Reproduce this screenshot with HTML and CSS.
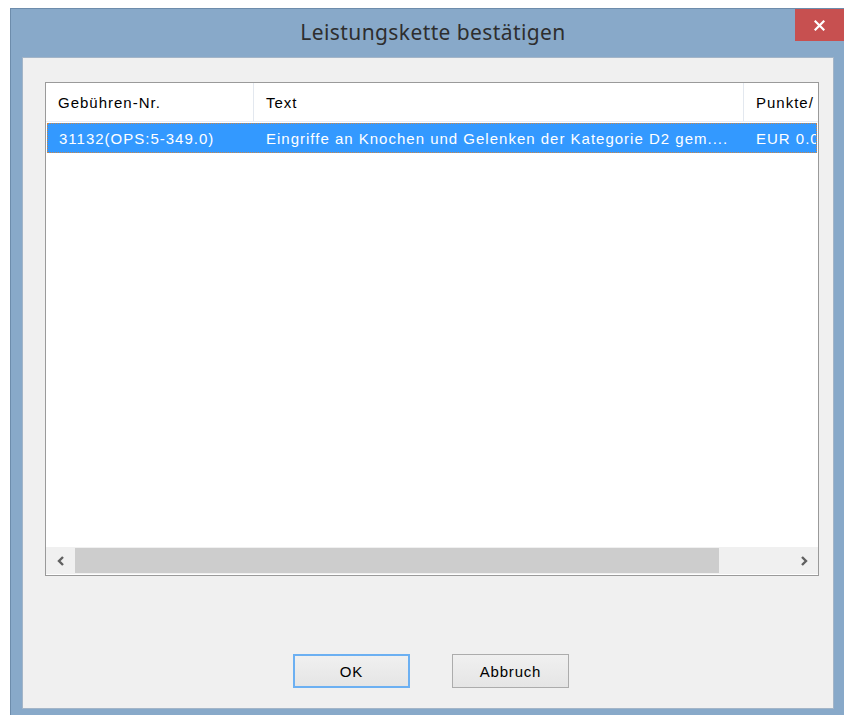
FILE: index.html
```html
<!DOCTYPE html>
<html lang="de">
<head>
<meta charset="utf-8">
<title>Leistungskette bestätigen</title>
<link rel="stylesheet" href="styles.css">
</head>
<body>
<div class="window">
  <div class="titlebar">
    <span class="title">Leistungskette bestätigen</span>
    <div class="close">
      <svg width="11" height="11" viewBox="0 0 11 11"><path d="M1.5 1.5 L9.5 9.5 M9.5 1.5 L1.5 9.5" stroke="#fff" stroke-width="2.2" stroke-linecap="square"/></svg>
    </div>
  </div>
  <div class="client">
    <div class="listview">
      <div class="header">
        <div class="col c1">Gebühren-Nr.</div>
        <div class="col c2">Text</div>
        <div class="col c3">Punkte/</div>
      </div>
      <div class="rows">
        <div class="row selected">
          <div class="cell c1">31132(OPS:5-349.0)</div>
          <div class="cell c2">Eingriffe an Knochen und Gelenken der Kategorie D2 gem....</div>
          <div class="cell c3">EUR 0.0</div>
        </div>
      </div>
      <div class="hscroll">
        <div class="arrow">
          <svg width="10" height="12" viewBox="0 0 10 12"><path d="M7 2 L3 6 L7 10" fill="none" stroke="#606060" stroke-width="2.4"/></svg>
        </div>
        <div class="track"><div class="thumb"></div></div>
        <div class="arrow">
          <svg width="10" height="12" viewBox="0 0 10 12"><path d="M3 2 L7 6 L3 10" fill="none" stroke="#606060" stroke-width="2.4"/></svg>
        </div>
      </div>
    </div>
    <div class="buttons">
      <button class="btn default">OK</button>
      <button class="btn">Abbruch</button>
    </div>
  </div>
</div>
</body>
</html>
```

FILE: styles.css
```css
html, body {
  margin: 0;
  padding: 0;
  background: #ffffff;
  overflow: hidden;
  width: 844px;
  height: 715px;
}

.window {
  margin: 8px 0 0 10px;
  width: 845px;
  height: 720px;
  background: #88a9c9;
  border-left: 1px solid #6d8cab;
  border-top: 1px solid #6d8cab;
  box-sizing: border-box;
  display: flex;
  flex-direction: column;
}

.titlebar {
  position: relative;
  height: 48px;
  flex: none;
  display: flex;
  align-items: center;
  justify-content: center;
}

.title {
  font-family: "Noto Sans", "Open Sans", sans-serif;
  font-size: 21px;
  color: #2e2e2e;
  letter-spacing: 0.4px;
  margin-top: -2px;
}

.close {
  position: absolute;
  top: 0;
  left: 784px;
  width: 60px;
  height: 32px;
  background: #c75050;
  display: flex;
  align-items: center;
  padding-left: 19px;
  box-sizing: border-box;
}

.client {
  margin-left: 11px;
  width: 812px;
  height: 652px;
  background: #f0f0f0;
  border: 1px solid #a3b5c8;
  box-sizing: border-box;
  display: flex;
  flex-direction: column;
  padding: 24px 0 0 22px;
}

.listview {
  width: 774px;
  height: 494px;
  border: 1px solid #9a9a9a;
  box-sizing: border-box;
  background: #ffffff;
  display: flex;
  flex-direction: column;
  overflow: hidden;
  font-family: "Liberation Sans", Arial, sans-serif;
  font-size: 15px;
  letter-spacing: 1px;
}

.header {
  display: flex;
  height: 39px;
  flex: none;
  border-bottom: 1px solid #e6eef8;
  box-sizing: border-box;
  color: #000;
}

.col {
  display: flex;
  align-items: center;
  padding-left: 12px;
  box-sizing: border-box;
  border-right: 1px solid #e3e8ef;
  white-space: nowrap;
  overflow: hidden;
  padding-top: 1px;
}

.c1 { width: 208px; flex: none; }
.c2 { width: 490px; flex: none; }
.c3 { flex: 1; min-width: 0; border-right: none; }

.rows {
  flex: 1;
  padding: 1px 0 0 1px;
}

.row {
  display: flex;
  height: 30px;
  width: 770px;
  box-sizing: border-box;
}

.row.selected {
  background: #3399ff;
  color: #ffffff;
  border: 1px dotted #c8864a;
}

.cell {
  display: flex;
  align-items: center;
  padding-left: 11px;
  box-sizing: border-box;
  white-space: nowrap;
  overflow: hidden;
}

.row .c1 { width: 207px; }

.hscroll {
  flex: none;
  height: 27px;
  display: flex;
  background: #f0f0f0;
  margin: 0 0 1px 0;
}

.arrow {
  width: 29px;
  flex: none;
  display: flex;
  align-items: center;
  justify-content: center;
}

.track {
  flex: 1;
  padding: 1px 0;
  display: flex;
}

.thumb {
  width: 644px;
  background: #cdcdcd;
}

.buttons {
  display: flex;
  gap: 42px;
  margin-top: 78px;
  padding-left: 248px;
}

.btn {
  width: 117px;
  height: 34px;
  border: 1px solid #acacac;
  background: linear-gradient(#f0f0f0, #e5e5e5);
  font-family: "Liberation Sans", Arial, sans-serif;
  font-size: 15px;
  letter-spacing: 0.8px;
  color: #000;
  padding: 0;
  margin: 0;
}

.btn.default {
  border: 2px solid #6cb0f2;
}
```
